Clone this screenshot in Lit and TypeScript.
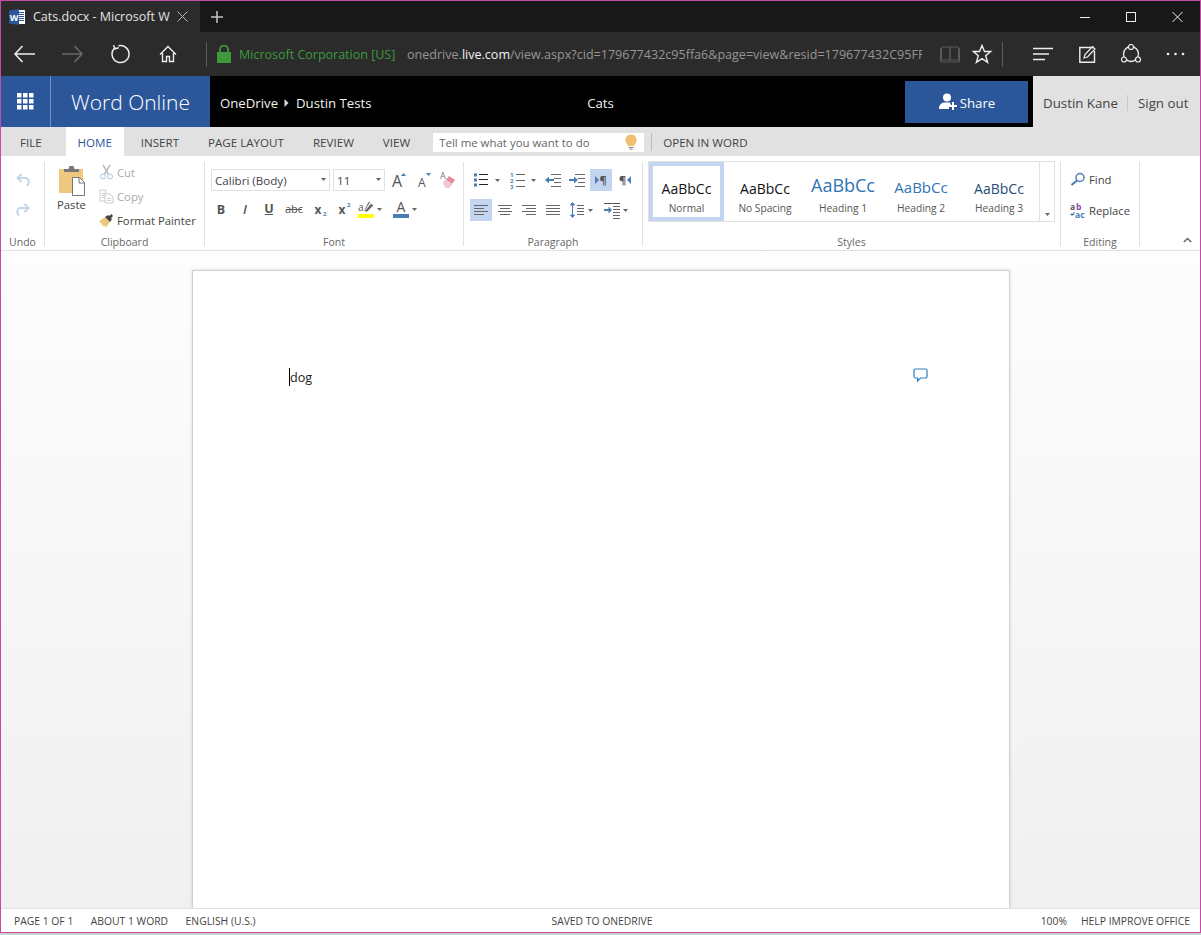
import { css, html, svg, LitElement } from "lit";
import { customElement } from "lit/decorators.js";

const BLUE = "#4a7cb5";
const GRAY = "#666";

const ic = (w: number, h: number, body: unknown) => html`<svg
  width=${w}
  height=${h}
  viewBox="0 0 ${w} ${h}"
  fill="none"
>${body}</svg>`;

const arrowDown = (w = 6, c = GRAY) =>
  ic(w, 22, svg`<path d="M0 10h5l-2.5 3z" fill=${c} />`);

const lines = (x: number, w: number, ys: number[], c = GRAY) =>
  ys.map((y) => svg`<rect x=${x} y=${y} width=${w} height="1" fill=${c} />`);

const styleItems = [
  { label: "No Spacing", cls: "s-plain" },
  { label: "Heading 1", cls: "s-h1" },
  { label: "Heading 2", cls: "s-h2" },
  { label: "Heading 3", cls: "s-h3" },
];

@customElement("app-root")
export class AppRoot extends LitElement {
  static styles = css`
    :host {
      display: block;
      width: 1201px;
      height: 935px;
      overflow: hidden;
      background: #cfcfcf;
      font-family: "Open Sans", sans-serif;
      font-size: 11.3px;
      color: #444;
    }
    svg {
      display: block;
      flex: none;
    }
    .window {
      box-sizing: border-box;
      height: 933px;
      border: 1px solid #c84aa8;
      display: flex;
      flex-direction: column;
      background: #fff;
    }

    /* browser chrome */
    .tabstrip {
      height: 31px;
      background: #181818;
      display: flex;
      align-items: stretch;
      flex: none;
    }
    .tab {
      width: 199px;
      background: #2b2b2b;
      display: flex;
      align-items: center;
      padding-left: 8px;
      box-sizing: border-box;
      color: #e4e4e4;
      font-size: 12.5px;
    }
    .tab-title {
      margin-left: 8px;
      width: 144px;
      white-space: nowrap;
      overflow: hidden;
    }
    .newtab {
      margin-left: 11px;
      align-self: center;
    }
    .winctl {
      margin-left: auto;
      display: flex;
      align-items: center;
      padding-right: 17px;
    }
    .addr {
      height: 44px;
      background: #2b2b2b;
      display: flex;
      align-items: center;
      flex: none;
      padding-left: 13px;
    }
    .addr-sep {
      width: 1px;
      height: 25px;
      background: #5c5c5c;
      flex: none;
    }
    .cert {
      color: #3c9a3c;
      font-size: 12.5px;
      white-space: nowrap;
      width: 168px;
      margin-left: 8px;
    }
    .url {
      width: 515px;
      color: #959595;
      font-size: 12.55px;
      white-space: nowrap;
      overflow: hidden;
    }
    .url b {
      color: #f2f2f2;
      font-weight: 400;
    }

    /* office header */
    .suite {
      height: 51px;
      flex: none;
      background: #000;
      display: grid;
      grid-template-columns: 1fr auto 1fr;
      align-items: center;
      color: #f0f0f0;
      font-size: 13.2px;
    }
    .suite-left {
      display: flex;
      align-items: center;
      height: 100%;
    }
    .brand {
      width: 209px;
      height: 100%;
      background: #2b579a;
      display: flex;
      align-items: center;
      flex: none;
    }
    .waffle {
      width: 49px;
      height: 100%;
      border-right: 1px solid #6f8fbe;
      display: flex;
      align-items: center;
      justify-content: center;
      flex: none;
    }
    .brand-name {
      margin-left: 20px;
      font-size: 21px;
      font-weight: 300;
      color: #fff;
      white-space: nowrap;
    }
    .crumbs {
      margin-left: 10px;
      padding-top: 2px;
      display: flex;
      align-items: center;
      white-space: nowrap;
    }
    .doc-title {
      padding-top: 2px;
    }
    .suite-right {
      display: flex;
      justify-content: flex-end;
      height: 100%;
      align-items: stretch;
    }
    .share {
      align-self: center;
      width: 123px;
      height: 42px;
      background: #2b579a;
      display: flex;
      align-items: center;
      justify-content: center;
      gap: 3px;
      color: #fff;
      padding-left: 1px;
      box-sizing: border-box;
    }
    .share span {
      padding-top: 2px;
    }
    .user {
      margin-left: 5px;
      width: 167px;
      background: #e1e1e1;
      display: flex;
      align-items: center;
      color: #444;
      box-sizing: border-box;
      padding: 2px 0 0 10px;
      white-space: nowrap;
      font-size: 13.3px;
    }
    .user i {
      display: block;
      width: 1px;
      height: 16px;
      background: #c8c8c8;
      margin: 0 10px 0 9px;
    }

    /* ribbon tabs */
    .tabs {
      box-sizing: border-box;
      height: 29px;
      flex: none;
      background: #e1e1e1;
      display: flex;
      align-items: center;
      color: #444;
      font-size: 11.6px;
      padding: 1px 0 0 19px;
    }
    .rtab {
      margin-right: 29px;
      white-space: nowrap;
    }
    .rtab.file {
      margin-right: 0;
    }
    .rtab.home {
      align-self: stretch;
      background: #fff;
      color: #2b579a;
      width: 58px;
      display: flex;
      align-items: center;
      justify-content: center;
      margin: -1px 17px 0 24px;
      padding-top: 1px;
    }
    .tell {
      box-sizing: border-box;
      width: 211px;
      height: 19px;
      margin-left: -6px;
      background: #fff;
      display: flex;
      align-items: center;
      justify-content: space-between;
      padding: 0 7px 0 6px;
      color: #666;
      font-size: 11.45px;
    }
    .tabs-sep {
      width: 1px;
      height: 18px;
      background: #bdbdbd;
      margin: 0 11px 0 7px;
    }

    /* ribbon */
    .ribbon {
      height: 95px;
      flex: none;
      display: flex;
      border-bottom: 1px solid #e1e1e1;
      box-sizing: border-box;
      position: relative;
    }
    .group {
      box-sizing: border-box;
      margin-top: 6px;
      height: 84px;
      border-right: 1px solid #e1e1e1;
      display: flex;
      flex-direction: column;
      flex: none;
    }
    .g-undo { width: 44px; }
    .g-clip { width: 160px; }
    .g-font { width: 259px; }
    .g-para { width: 179px; }
    .g-styles { width: 418px; }
    .g-edit { width: 79px; }
    .body {
      flex: 1;
      min-height: 0;
    }
    .label {
      text-align: center;
      line-height: 12px;
      height: 12px;
      margin-bottom: -2px;
      color: #666;
      font-size: 10.5px;
    }
    .undo-body {
      display: flex;
      flex-direction: column;
      align-items: center;
      padding-top: 11px;
      gap: 17px;
    }
    .clip-body {
      display: flex;
      padding-left: 12px;
    }
    .paste {
      width: 42px;
      padding-top: 3px;
      color: #444;
    }
    .paste span {
      display: block;
      margin-top: 1px;
      line-height: 16px;
    }
    .clip-col {
      margin-top: -2px;
    }
    .clip-row {
      height: 24px;
      display: flex;
      align-items: center;
      gap: 3px;
      white-space: nowrap;
    }
    .muted {
      color: #aaa;
    }
    .font-body {
      padding: 7px 0 0 6px;
    }
    .row {
      display: flex;
      align-items: center;
      height: 22px;
    }
    .font-row2 {
      margin: 7px 0 0 -2px;
    }
    .combo {
      box-sizing: border-box;
      height: 22px;
      border: 1px solid #e1e1e1;
      display: flex;
      align-items: center;
      justify-content: space-between;
      padding: 0 3px 0 3px;
      color: #444;
      font-size: 11.6px;
      white-space: nowrap;
    }
    .combo-name { width: 119px; }
    .combo-size {
      width: 52px;
      margin-left: 3px;
    }
    .para-body {
      padding: 7px 0 0 6px;
    }
    .para-row2 {
      margin-top: 8px;
    }
    .styles-box {
      box-sizing: border-box;
      width: 407px;
      height: 61px;
      margin: -1px 0 0 5px;
      border: 1px solid #e1e1e1;
      display: flex;
    }
    .style-item {
      width: 78px;
      flex: none;
      display: flex;
      flex-direction: column;
      align-items: center;
      box-sizing: border-box;
    }
    .style-item.normal {
      width: 75px;
      border: 4px solid #c3d5f0;
      margin-right: 2px;
    }
    .sample {
      height: 38px;
      display: flex;
      align-items: center;
      padding-top: 14px;
      box-sizing: border-box;
      font-size: 14px;
      color: #111;
      white-space: nowrap;
    }
    .normal .sample {
      height: 34px;
      padding-top: 11px;
    }
    .s-h1 .sample { font-size: 18px; color: #2e74b5; padding-top: 8px; }
    .s-h2 .sample { font-size: 15px; color: #2e74b5; padding-top: 12px; }
    .s-h3 .sample { font-size: 14px; color: #1f4d78; padding-top: 14px; }
    .style-name {
      margin-top: 1px;
      font-size: 10.2px;
      line-height: 14px;
      color: #555;
      white-space: nowrap;
    }
    .style-more {
      margin-left: 1px;
      width: 15px;
      flex: none;
      border-left: 1px solid #e1e1e1;
      display: flex;
      align-items: flex-end;
      justify-content: center;
      padding-bottom: 5px;
    }
    .edit-body {
      padding: 6px 0 0 9px;
    }
    .edit-row {
      height: 22px;
      display: flex;
      align-items: center;
      gap: 3px;
      margin-bottom: 9px;
      white-space: nowrap;
    }
    .collapse {
      position: absolute;
      right: 8px;
      bottom: 7px;
    }

    /* document area */
    .canvas {
      flex: 1;
      min-height: 0;
      background: linear-gradient(#fdfdfd, #f0f0f0);
      padding: 19px 190px 0 191px;
      overflow: hidden;
    }
    .page {
      box-sizing: border-box;
      height: 100%;
      background: #fff;
      border: 1px solid #d0d0d0;
      border-bottom: 0;
      box-shadow: 0 0 3px rgba(0, 0, 0, 0.14);
      padding: 97px 81px 0 96px;
      display: flex;
      justify-content: space-between;
      align-items: flex-start;
    }
    .doc-text {
      font-size: 12.6px;
      color: #222;
      line-height: 20px;
      border-left: 1px solid #000;
      height: 18px;
    }
    .status {
      height: 24px;
      flex: none;
      border-top: 1px solid #e1e1e1;
      box-sizing: border-box;
      display: grid;
      grid-template-columns: 1fr auto 1fr;
      align-items: center;
      background: #fff;
      font-size: 10.35px;
      color: #444;
      padding: 1px 10px 0 13px;
      white-space: nowrap;
    }
    .status-left {
      display: flex;
      gap: 17.5px;
    }
    .status-right {
      display: flex;
      justify-content: flex-end;
      gap: 14px;
    }
  `;

  private chrome() {
    return html`
      <div class="tabstrip">
        <div class="tab">
          ${ic(
            16,
            16,
            svg`<rect x="7" y="1" width="9" height="14" fill="#fff" />
              ${lines(10, 5, [3, 5, 7, 9, 11], "#2b579a")}
              <path d="M0 1.5 10 0v16L0 14.5z" fill="#2b579a" />
              <text x="5" y="11.5" font-size="9" font-weight="700" text-anchor="middle" fill="#fff" font-family="Open Sans">W</text>`
          )}
          <div class="tab-title">Cats.docx - Microsoft W</div>
          ${ic(11, 11, svg`<path d="M.5.5l10 10m0-10-10 10" stroke="#bbb" />`)}
        </div>
        <div class="newtab">
          ${ic(
            12,
            12,
            svg`<path d="M6 0v12M0 6h12" stroke="#c4c4c4" stroke-width="1.5" />`
          )}
        </div>
        <div class="winctl">
          ${ic(46, 12, svg`<path d="M0 6.5h10" stroke="#eee" />`)}
          ${ic(46, 12, svg`<rect x=".5" y="1.5" width="9" height="9" stroke="#eee" />`)}
          ${ic(11, 12, svg`<path d="M.5 1l10 10m0-10-10 10" stroke="#eee" />`)}
        </div>
      </div>
      <div class="addr">
        ${ic(
          48,
          20,
          svg`<path d="M8.5 2 1 10l7.5 8M1 10h20" stroke="#eee" stroke-width="1.6" />`
        )}
        ${ic(
          49,
          20,
          svg`<path d="M12.5 2 20 10l-7.5 8M0 10h20" stroke="#6a6a6a" stroke-width="1.6" />`
        )}
        ${ic(
          48,
          20,
          svg`<path d="M7.5 1.8a8.5 8.5 0 1 1-4.2 2.5M2.5 1.2l1.6 3.6 3.6-1" stroke="#eee" stroke-width="1.5" />`
        )}
        ${ic(
          47,
          18,
          svg`<path d="M1 9.5 9 1.5l8 8M3.5 8v8.5H7.5v-5h3v5h4V8" stroke="#eee" stroke-width="1.4" />`
        )}
        <div class="addr-sep"></div>
        ${ic(
          24,
          18,
          svg`<path d="M13 8V4.500a4 4 0 0 1 8 0V8" stroke="#3c9a3c" stroke-width="1.8" />
            <rect x="10" y="7" width="14" height="11" fill="#3c9a3c" />`
        )}
        <div class="cert">Microsoft Corporation [US]</div>
        <div class="url">
          onedrive.<b>live.com</b>/view.aspx?cid=179677432c95ffa6&amp;page=view&amp;resid=179677432C95FFA6
        </div>
        ${ic(
          50,
          18,
          svg`<path d="M19.500 2h8.500v13h-8.500zM28 2h8.500v13H28z" stroke="#5a5a5a" />
            <path d="M18.500 3.500V17h19V3.500" stroke="#5a5a5a" />`
        )}
        ${ic(
          30,
          20,
          svg`<path d="m10 1.5 2.5 6h6.2l-5 4.2 1.9 6.6L10 14.6l-5.6 3.7 1.9-6.6-5-4.2h6.2z" stroke="#eee" stroke-width="1.4" />`
        )}
        <div class="addr-sep"></div>
        ${ic(30, 14, svg``)}
        ${ic(
          46,
          14,
          svg`<path d="M0 1.5h20M0 7h16M0 12.5h12" stroke="#eee" stroke-width="1.4" />`
        )}
        ${ic(
          42,
          18,
          svg`<path d="M15 2.5H.8v14.7h14.7V6" stroke="#eee" stroke-width="1.4" />
            <path d="m5 13 1-3.5L13.5 1.5 16 4l-7.5 8z" stroke="#eee" stroke-width="1.2" />`
        )}
        ${ic(
          45,
          20,
          svg`<circle cx="10" cy="10" r="7.5" stroke="#eee" stroke-width="1.3" />
            <circle cx="10" cy="3" r="2.5" fill="#2b2b2b" stroke="#eee" stroke-width="1.2" />
            <circle cx="3" cy="15.5" r="2.5" fill="#2b2b2b" stroke="#eee" stroke-width="1.2" />
            <circle cx="17" cy="15.5" r="2.5" fill="#2b2b2b" stroke="#eee" stroke-width="1.2" />`
        )}
        ${ic(
          19,
          4,
          svg`<circle cx="2" cy="2" r="1.3" fill="#eee" /><circle cx="9.5" cy="2" r="1.3" fill="#eee" /><circle cx="17" cy="2" r="1.3" fill="#eee" />`
        )}
      </div>
    `;
  }

  private suite() {
    const squares = [0, 6, 12].flatMap((y) =>
      [0, 6, 12].map((x) => svg`<rect x=${x} y=${y} width="4.5" height="4.5" fill="#fff" />`)
    );
    return html`
      <div class="suite">
        <div class="suite-left">
          <div class="brand">
            <div class="waffle">${ic(17, 17, squares)}</div>
            <div class="brand-name">Word Online</div>
          </div>
          <div class="crumbs">
            OneDrive
            ${ic(18, 8, svg`<path d="M6.5 0v8l4-4z" fill="#ddd" />`)}
            Dustin Tests
          </div>
        </div>
        <div class="doc-title">Cats</div>
        <div class="suite-right">
          <div class="share">
            ${ic(
              18,
              17,
              svg`<circle cx="8" cy="4.5" r="4" fill="#fff" />
                <path d="M0 16c0-5 3-6.5 6-6.5h5l1 2.5H10v4z" fill="#fff" />
                <path d="M14 9v8M10 13h8" stroke="#fff" stroke-width="2" />`
            )}
            <span>Share</span>
          </div>
          <div class="user">Dustin Kane<i></i>Sign out</div>
        </div>
      </div>
    `;
  }

  private tabs() {
    return html`
      <div class="tabs">
        <div class="rtab file">FILE</div>
        <div class="rtab home">HOME</div>
        <div class="rtab">INSERT</div>
        <div class="rtab">PAGE LAYOUT</div>
        <div class="rtab">REVIEW</div>
        <div class="rtab">VIEW</div>
        <div class="tell">
          Tell me what you want to do
          ${ic(
            12,
            16,
            svg`<path d="M6 .5a5.6 5.6 0 0 1 3.2 10.2V12H2.8v-1.3A5.6 5.6 0 0 1 6 .5z" fill="#f0c070" />
              <path d="M3.5 13.5h5M4.5 15.2h3" stroke="#888" />`
          )}
        </div>
        <div class="tabs-sep"></div>
        <div>OPEN IN WORD</div>
      </div>
    `;
  }

  private undoGroup() {
    return html`
      <div class="group g-undo">
        <div class="body undo-body">
          ${ic(
            14,
            13,
            svg`<path d="M5.5 1 1.5 5l4 4M1.5 5H9c2.5 0 3.8 1.6 3.8 3.8 0 1.6-.8 3-2 3.7" stroke="#c3d5ea" stroke-width="2" />`
          )}
          ${ic(
            14,
            13,
            svg`<path d="M8.5 1l4 4-4 4M12.5 5H5C2.500 5 1.200 6.600 1.200 8.800c0 1.600.8 3 2 3.700" stroke="#c3d5ea" stroke-width="2" />`
          )}
        </div>
        <div class="label">Undo</div>
      </div>
    `;
  }

  private clipboardGroup() {
    return html`
      <div class="group g-clip">
        <div class="body clip-body">
          <div class="paste">
            ${ic(
              29,
              31,
              svg`<rect x="2" y="4" width="24" height="24" fill="#edc87e" />
                <path d="M7 7V4h4.500l1-3h4l1 3H22v3z" fill="#777" />
                <path d="M15.500 12.500h7l5 5v13h-12z" fill="#fff" stroke="#777" />
                <path d="M22 12.500v5.500h5.500" stroke="#777" />`
            )}
            <span>Paste</span>
          </div>
          <div class="clip-col">
            <div class="clip-row muted">
              ${ic(
                15,
                16,
                svg`<path d="m4 1 5.500 9M11 1 5.500 10" stroke="#bbb" stroke-width="1.500" />
                  <circle cx="4" cy="12.500" r="2.500" stroke="#a9c3e2" />
                  <circle cx="11" cy="12.500" r="2.500" stroke="#a9c3e2" />`
              )}
              Cut
            </div>
            <div class="clip-row muted">
              ${ic(
                15,
                15,
                svg`<path d="M1 1h6v11H1z" stroke="#ccc" /><path d="M6 5h5l3 3v6H6z" fill="#fff" stroke="#ccc" />
                  ${lines(3, 3, [4, 6, 8], "#ccc")}${lines(8, 4, [9, 11], "#ccc")}`
              )}
              Copy
            </div>
            <div class="clip-row">
              ${ic(
                15,
                14,
                svg`<path d="M0 8.500 6 4l5 5-4 5.500-2-2-1 1-.500-2-1 .500-.500-2z" fill="#edc87e" />
                  <path d="M6 4l3-2 1 1 2.500-2 1.500 2-2 2 1 1-2 3z" fill="#444" />`
              )}
              Format Painter
            </div>
          </div>
        </div>
        <div class="label">Clipboard</div>
      </div>
    `;
  }

  private fontGroup() {
    const caret = (c: string) => svg`<path d="M0 0h5l-2.500 3z" fill=${c} />`;
    return html`
      <div class="group g-font">
        <div class="body font-body">
          <div class="row">
            <div class="combo combo-name">Calibri (Body)${ic(5, 4, caret(GRAY))}</div>
            <div class="combo combo-size">11${ic(5, 4, caret(GRAY))}</div>
            ${ic(
              22,
              22,
              svg`<text x="7" y="18" font-size="16" fill="#555" font-family="Open Sans">A</text><path d="M16 7l2.500-3 2.500 3z" fill=${BLUE} />`
            )}
            ${ic(
              25,
              22,
              svg`<text x="11" y="18" font-size="12" fill="#555" font-family="Open Sans">A</text><path d="M19 4h5l-2.500 3z" fill=${BLUE} />`
            )}
            ${ic(
              24,
              22,
              svg`<text x="8" y="10" font-size="9" fill="#777" font-family="Open Sans">A</text>
                <path d="m11 14 6-7 6 4-6 8z" fill="#e88a98" /><path d="m11 14 3-3.500 6 4-3 4.500h-4z" fill="#f4c8cf" />`
            )}
          </div>
          <div class="row font-row2">
            ${ic(
              24,
              22,
              svg`<text x="12" y="15.500" text-anchor="middle" font-size="12.500" font-weight="700" fill="#555" font-family="Open Sans">B</text>`
            )}
            ${ic(
              24,
              22,
              svg`<text x="12" y="15.500" text-anchor="middle" font-size="13" font-style="italic" font-weight="600" fill="#555" font-family="Open Sans">I</text>`
            )}
            ${ic(
              24,
              22,
              svg`<text x="12" y="14.500" text-anchor="middle" font-size="12.500" fill="#555" font-family="Open Sans" font-weight="700">U</text><path d="M8 16.500h8" stroke="#555" />`
            )}
            ${ic(
              24,
              22,
              svg`<text x="13" y="15" text-anchor="middle" font-size="11" fill="#555" font-family="Open Sans">abc</text><path d="M5 11.500h16" stroke="#555" />`
            )}
            ${ic(
              26,
              22,
              svg`<text x="13" y="15.500" text-anchor="middle" font-size="12" font-weight="700" fill="#555" font-family="Open Sans">x</text><text x="18" y="17.500" font-size="6" fill=${BLUE} font-family="Open Sans" font-weight="700">2</text>`
            )}
            ${ic(
              24,
              22,
              svg`<text x="11" y="15.500" text-anchor="middle" font-size="12" font-weight="700" fill="#555" font-family="Open Sans">x</text><text x="16" y="9" font-size="6" fill=${BLUE} font-family="Open Sans" font-weight="700">2</text>`
            )}
            ${ic(
              22,
              22,
              svg`<text x="3" y="13" font-size="10" fill="#555" font-family="Open Sans">a</text>
                <path d="m9 13 5-9 1 .500M10 13l6-7 2 1.500-6 6z" fill="#666" stroke="#666" stroke-width=".5" />
                <rect x="3" y="16" width="16" height="4" fill="#ffff00" />`
            )}
            ${arrowDown(13)}
            ${ic(
              22,
              22,
              svg`<text x="11" y="14" text-anchor="middle" font-size="14" fill="#555" font-family="Open Sans">A</text><rect x="3" y="16" width="16" height="4" fill=${BLUE} />`
            )}
            ${arrowDown(6)}
          </div>
        </div>
        <div class="label">Font</div>
      </div>
    `;
  }

  private paragraphGroup() {
    const dots = [5.5, 10.5, 15.5];
    return html`
      <div class="group g-para">
        <div class="body para-body">
          <div class="row">
            ${ic(
              25,
              22,
              svg`${dots.map((y) => svg`<rect x="4" y=${y - 1} width="3" height="3" fill=${BLUE} />`)}
                ${lines(9, 9, [5, 10, 15], "#222")}`
            )}
            ${arrowDown(15)}
            ${ic(
              21,
              22,
              svg`<text x="0" y="8" font-size="6" font-weight="700" fill=${BLUE} font-family="Open Sans">1</text>
                <text x="0" y="14" font-size="6" font-weight="700" fill=${BLUE} font-family="Open Sans">2</text>
                <text x="0" y="20" font-size="6" font-weight="700" fill=${BLUE} font-family="Open Sans">3</text>
                ${lines(6, 9, [5, 11, 17])}`
            )}
            ${arrowDown(14)}
            ${ic(
              24,
              22,
              svg`<path d="M0 11l4-3.500v2.500h5v2H4v2.500z" fill=${BLUE} />${lines(6, 10, [5, 17])}${lines(9, 7, [9, 13])}`
            )}
            ${ic(
              21,
              22,
              svg`<path d="M9 11 5 7.500v2.500H0v2h5v2.500z" fill=${BLUE} />${lines(6, 10, [5, 17])}${lines(9, 7, [9, 13])}`
            )}
            ${ic(
              22,
              22,
              svg`<rect width="22" height="22" fill="#c3d5f0" />
                <path d="M5 7v8l4-4z" fill=${BLUE} />
                <text x="9.500" y="15" font-size="11" font-weight="700" fill="#555" font-family="Open Sans">¶</text>`
            )}
            ${ic(
              22,
              22,
              svg`<text x="7" y="15" font-size="11" font-weight="700" fill="#555" font-family="Open Sans">¶</text>
                <path d="M19 7v8l-4-4z" fill=${BLUE} />`
            )}
          </div>
          <div class="row para-row2">
            ${ic(
              22,
              22,
              svg`<rect width="22" height="22" fill="#c3d5f0" />${lines(4, 14, [6, 12])}${lines(4, 10, [9, 15])}`
            )}
            ${ic(24, 22, svg`${lines(6, 14, [6, 12])}${lines(8, 10, [9, 15])}`)}
            ${ic(24, 22, svg`${lines(6, 14, [6, 12])}${lines(10, 10, [9, 15])}`)}
            ${ic(24, 22, svg`${lines(6, 14, [6, 9, 12, 15])}`)}
            ${ic(
              24,
              22,
              svg`<path d="M8.500 4v14" stroke=${BLUE} /><path d="M6.500 6l2-2.500 2 2.500zM6.500 16l2 2.500 2-2.500z" fill=${BLUE} stroke=${BLUE} />${lines(13, 7, [6, 9, 12, 15])}`
            )}
            ${arrowDown(15)}
            ${ic(
              20,
              22,
              svg`<path d="M1 4.500h16" stroke="#555" /><path d="M9 11 5.500 7.500V10H1v2h4.500v2.500z" fill=${BLUE} />${lines(10, 7, [7, 10, 13, 16, 19])}`
            )}
            ${arrowDown(6)}
          </div>
        </div>
        <div class="label">Paragraph</div>
      </div>
    `;
  }

  private stylesGroup() {
    return html`
      <div class="group g-styles">
        <div class="body">
          <div class="styles-box">
            <div class="style-item normal">
              <div class="sample">AaBbCc</div>
              <div class="style-name">Normal</div>
            </div>
            ${styleItems.map(
              (s) => html`<div class="style-item ${s.cls}">
                <div class="sample">AaBbCc</div>
                <div class="style-name">${s.label}</div>
              </div>`
            )}
            <div class="style-more">
              ${ic(5, 3, svg`<path d="M0 0h5L2.500 3z" fill="#666" />`)}
            </div>
          </div>
        </div>
        <div class="label">Styles</div>
      </div>
    `;
  }

  private editingGroup() {
    return html`
      <div class="group g-edit">
        <div class="body edit-body">
          <div class="edit-row">
            ${ic(
              16,
              14,
              svg`<circle cx="10" cy="5.500" r="4" stroke=${BLUE} stroke-width="1.500" />
                <path d="m7 8.500-5.500 4.500" stroke=${BLUE} stroke-width="2.200" />`
            )}
            Find
          </div>
          <div class="edit-row">
            ${ic(
              16,
              16,
              svg`<text x="0" y="7.500" font-size="8.500" font-weight="700" fill="#555" font-family="Open Sans">a</text>
                <text x="6" y="7.500" font-size="8.500" font-weight="700" fill="#8a4aa8" font-family="Open Sans">b</text>
                <text x="5" y="15.500" font-size="8.500" font-weight="700" fill=${BLUE} font-family="Open Sans">ac</text>
                <path d="M4 10v2.500H1M2.500 11 1 12.500 2.500 14" stroke=${BLUE} />`
            )}
            Replace
          </div>
        </div>
        <div class="label">Editing</div>
      </div>
    `;
  }

  render() {
    return html`
      <div class="window">
        ${this.chrome()} ${this.suite()} ${this.tabs()}
        <div class="ribbon">
          ${this.undoGroup()} ${this.clipboardGroup()} ${this.fontGroup()}
          ${this.paragraphGroup()} ${this.stylesGroup()} ${this.editingGroup()}
          <div class="collapse">
            ${ic(
              9,
              6,
              svg`<path d="m.8 5 3.700-3.500L8.200 5" stroke="#666" stroke-width="1.600" />`
            )}
          </div>
        </div>
        <div class="canvas">
          <div class="page">
            <div class="doc-text">dog</div>
            ${ic(
              15,
              15,
              svg`<path d="M2.500 1h10A1.500 1.500 0 0 1 14 2.500v6a1.500 1.500 0 0 1-1.500 1.500H7.500L4.500 13V10h-2A1.500 1.500 0 0 1 1 8.500v-6A1.500 1.500 0 0 1 2.500 1z" stroke="#2e7fc4" stroke-width="1.200" />`
            )}
          </div>
        </div>
        <div class="status">
          <div class="status-left">
            <span>PAGE 1 OF 1</span><span>ABOUT 1 WORD</span><span>ENGLISH (U.S.)</span>
          </div>
          <div>SAVED TO ONEDRIVE</div>
          <div class="status-right"><span>100%</span><span>HELP IMPROVE OFFICE</span></div>
        </div>
      </div>
    `;
  }
}
